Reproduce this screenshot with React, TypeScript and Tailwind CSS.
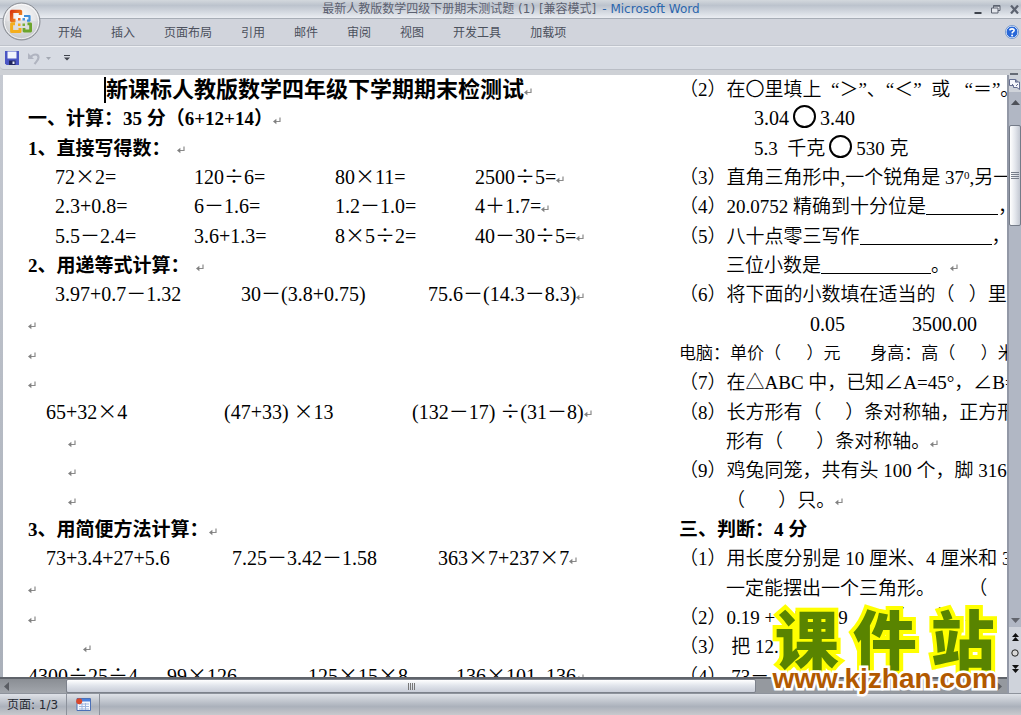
import { Fragment, type ReactNode } from 'react';

const TABS = ['开始', '插入', '页面布局', '引用', '邮件', '审阅', '视图', '开发工具', '加载项'];

function Mark({ className = 'ml-1' }: { className?: string }) {
  return (
    <svg className={`inline-block shrink-0 ${className}`} width="8" height="8" viewBox="0 0 8 8" aria-hidden="true">
      <path d="M7 0.5V4.5H2" fill="none" stroke="#8a8a8a" strokeWidth="1.2" />
      <path d="M0 4.5L3.4 1.8V7.2Z" fill="#808080" />
    </svg>
  );
}

/* Operators take the full-width forms of the Chinese font. */
function T({ children }: { children: string }) {
  return (
    <>
      {children.split(/([×÷]+)/).map((part, i) =>
        i % 2 ? (
          <span key={i} className="leading-none font-['Noto_Sans_CJK_SC',sans-serif]">{part}</span>
        ) : (
          <Fragment key={i}>{part}</Fragment>
        ),
      )}
    </>
  );
}

function Line({ className = '', children }: { className?: string; children?: ReactNode }) {
  return <div className={`flex min-h-0 items-center whitespace-pre ${className}`}>{children}</div>;
}

function Sums({ items, cols, indent }: { items: string[]; cols: string; indent: string }) {
  return (
    <div className={`grid min-h-0 items-center whitespace-pre text-[20px] ${cols} ${indent}`}>
      {items.map((item, i) => (
        <span key={item} className="flex items-center">
          <span><T>{item}</T></span>
          {i === items.length - 1 && <Mark className="mt-1" />}
        </span>
      ))}
    </div>
  );
}

function Blank({ className }: { className: string }) {
  return <span className={`inline-block h-px translate-y-0.5 bg-black ${className}`} />;
}

function Ring() {
  return <span className="mx-1 mb-1 size-[23px] shrink-0 rounded-full border-2 border-black" />;
}

function LeftColumn() {
  const four = 'grid-cols-[139px_141px_140px_auto]';
  return (
    <section className="grid h-[616px] w-[652px] shrink-0 auto-rows-fr pl-[25px]">
      <Line className="pl-[76px] text-[22px] font-bold">
        <span className="h-[26px] w-0.5 shrink-0 bg-black" />
        <h1>新课标人教版数学四年级下学期期末检测试</h1>
        <Mark className="mt-1" />
      </Line>
      <Line className="font-bold">
        <h2>一、计算：35 分（6+12+14）</h2>
        <Mark className="mt-1" />
      </Line>
      <Line className="font-bold">
        <h3>1、直接写得数：</h3>
        <Mark className="mt-1 ml-1.5" />
      </Line>
      <Sums cols={four} indent="pl-[27px]" items={['72×2=', '120÷6=', '80×11=', '2500÷5=']} />
      <Sums cols={four} indent="pl-[27px]" items={['2.3+0.8=', '6－1.6=', '1.2－1.0=', '4＋1.7=']} />
      <Sums cols={four} indent="pl-[27px]" items={['5.5－2.4=', '3.6+1.3=', '8×5÷2=', '40－30÷5=']} />
      <Line className="font-bold">
        <h3>2、用递等式计算：</h3>
        <Mark className="mt-1 ml-1.5" />
      </Line>
      <Sums cols="grid-cols-[186px_187px_auto]" indent="pl-[27px]" items={['3.97+0.7－1.32', '30－(3.8+0.75)', '75.6－(14.3－8.3)']} />
      <Line><Mark className="mt-1" /></Line>
      <Line><Mark className="mt-1" /></Line>
      <Line><Mark className="mt-1" /></Line>
      <Sums cols="grid-cols-[178px_188px_auto]" indent="pl-[18px]" items={['65+32×4', '(47+33) ×13', '(132－17) ÷(31－8)']} />
      <Line className="pl-[40px]"><Mark className="mt-1" /></Line>
      <Line className="pl-[40px]"><Mark className="mt-1" /></Line>
      <Line className="pl-[40px]"><Mark className="mt-1" /></Line>
      <Line className="font-bold">
        <h3>3、用简便方法计算：</h3>
        <Mark className="mt-1" />
      </Line>
      <Sums cols="grid-cols-[186px_206px_auto]" indent="pl-[18px]" items={['73+3.4+27+5.6', '7.25－3.42－1.58', '363×7+237×7']} />
      <Line><Mark className="mt-1" /></Line>
      <Line><Mark className="mt-1" /></Line>
      <Line className="pl-[55px]"><Mark className="mt-1" /></Line>
      <Sums cols="grid-cols-[139px_141px_148px_auto]" indent="pl-0" items={['4300÷25÷4', '99×126', '125×15×8', '136×101–136']} />
    </section>
  );
}

function RightColumn() {
  return (
    <section className="grid h-[616px] min-w-0 flex-1 auto-rows-fr overflow-hidden pl-[24px]">
      <Line>（2）在〇里填上  “＞”、“＜”  或   “＝”。</Line>
      <Line className="pl-[75px] text-[20px]">3.04<Ring />3.40</Line>
      <Line className="pl-[75px]">5.3  千克<Ring />530 克</Line>
      <Line><span>（3）直角三角形中,一个锐角是 37<sup className="text-[11px]">0</sup>,另一</span></Line>
      <Line><span>（4）20.0752 精确到十分位是<Blank className="w-[72px]" />，</span></Line>
      <Line><span>（5）八十点零三写作<Blank className="w-[132px]" />，</span></Line>
      <Line className="pl-[47px]"><span>三位小数是<Blank className="w-[110px]" />。</span><Mark className="mt-1" /></Line>
      <Line>（6）将下面的小数填在适当的（   ）里</Line>
      <Line className="gap-[67px] pl-[131px] text-[20px]"><span>0.05</span><span>3500.00</span></Line>
      <Line className="text-[17px]">电脑：单价（      ）元       身高：高（      ）米</Line>
      <Line>（7）在△ABC 中，已知∠A=45°，∠B=60°</Line>
      <Line>（8）长方形有（     ）条对称轴，正方形</Line>
      <Line className="pl-[47px]">形有（       ）条对称轴。<Mark className="mt-1" /></Line>
      <Line>（9）鸡兔同笼，共有头 100 个，脚 316 只</Line>
      <Line className="pl-[47px]">（       ）只。<Mark className="mt-1" /></Line>
      <Line className="font-bold"><h2>三、判断：4 分</h2></Line>
      <Line>（1）用长度分别是 10 厘米、4 厘米和 3</Line>
      <Line className="pl-[47px]">一定能摆出一个三角形。       （</Line>
      <Line>（2）0.19 + 0.5=0.69        （       ）<Mark className="mt-1 ml-2" /></Line>
      <Line>（3） 把 12.</Line>
      <Line>（4） 73－</Line>
    </section>
  );
}

function OfficeButton() {
  return (
    <button aria-label="Office" className="absolute top-[2px] left-[2px] size-[39px]">
      <svg viewBox="0 0 39 39" className="size-full" aria-hidden="true">
        <defs>
          <radialGradient id="orb" cx="50%" cy="38%" r="62%">
            <stop offset="0" stopColor="#ffffff" />
            <stop offset="0.6" stopColor="#e6e6e8" />
            <stop offset="1" stopColor="#b4b7bc" />
          </radialGradient>
          <linearGradient id="flame" x1="0" y1="0" x2="1" y2="1">
            <stop offset="0" stopColor="#d93a12" />
            <stop offset="1" stopColor="#f59a24" />
          </linearGradient>
        </defs>
        <circle cx="19.5" cy="19.5" r="18.5" fill="url(#orb)" stroke="#8b8f96" />
        <circle cx="19.5" cy="19.5" r="17" fill="none" stroke="#fbfbfc" strokeWidth="1" />
        <path d="M3 20C12 17 27 17 36 20A16.500 16.500 0 0 1 3 20Z" fill="#d2d3d6" opacity="0.55" />
        <g fill="none" strokeLinejoin="round">
          <path d="M13.500 18.500H9.600V9.400H18.500V13" stroke="url(#flame)" strokeWidth="3.400" />
          <path d="M22 14H27.500V18.600H25" stroke="#3f8fdc" strokeWidth="2.200" />
          <path d="M13 21.800H9.600V29.600H18V26" stroke="#f4ae1c" strokeWidth="3" />
          <path d="M25.500 21.800H28.600V29H22V26" stroke="#6da52c" strokeWidth="2.800" />
        </g>
        <path d="M16 16h2.500v2.500H16z" fill="#ee6a1c" />
        <path d="M20.500 16H23v2.500h-2.500z" fill="#4a97e0" />
        <path d="M16 21.500h2.500V24H16z" fill="#f4b11f" />
        <path d="M20.500 21.500H23V24h-2.500z" fill="#7bb03a" />
      </svg>
    </button>
  );
}

function TitleBar() {
  return (
    <header className="flex h-[19px] shrink-0 items-center border-b border-[#a7adb6] bg-linear-to-b from-[#d3d8dd] via-[#bcc3cd] via-30% to-[#eaedf2]">
      <div className="w-[52px]" />
      <p className="min-w-0 flex-1 whitespace-nowrap text-center text-xs leading-[18px] text-[#5c6170] font-['DejaVu_Sans','Noto_Sans_CJK_SC',sans-serif]">
        最新人教版数学四级下册期末测试题 (1) [兼容模式]
        <span className="ml-1.5 text-[#2b66ad]">- Microsoft Word</span>
      </p>
      <div className="flex w-[51px] items-center gap-[9px] pl-1 text-[#5d6370]">
        <button aria-label="最小化">
          <svg width="8" height="10" viewBox="0 0 8 10" aria-hidden="true"><path d="M0.500 9H7.500" stroke="#3e434c" strokeWidth="2" /></svg>
        </button>
        <button aria-label="还原">
          <svg width="10" height="9" viewBox="0 0 10 9" fill="#e3e6ec" stroke="#5d6370" aria-hidden="true">
            <path d="M2.500 0.500h6.500v5h-6.500z" /><path d="M2.500 1h6.500" strokeWidth="1.500" /><path d="M0.500 3h6.500v5H0.500z" />
          </svg>
        </button>
        <button aria-label="关闭">
          <svg width="10" height="9" viewBox="0 0 10 9" aria-hidden="true"><path d="M1 0.500L8 8.500M8 0.500L1 8.500" stroke="#5d6370" strokeWidth="2.200" /></svg>
        </button>
      </div>
    </header>
  );
}

function VerticalBar() {
  return (
    <div className="flex w-[14px] shrink-0 flex-col items-center border-l-2 border-[#9298a6] bg-[#b1b7c4]">
      <div className="h-[17px] w-full bg-[#cfd3da]">
        <svg width="12" height="17" viewBox="0 0 12 17" className="block" aria-hidden="true">
          <path d="M0.500 4.500H6.500V7H10.500V14.500L8 12.500H4.500V10.500H0.500Z" fill="#f5f6fb" stroke="#666f91" />
          <path d="M6.500 4.500L8.500 6L7 7.500M4.500 10.500L3 9M7 11L9 9" fill="none" stroke="#666f91" />
        </svg>
      </div>
      <button aria-label="向上滚动" className="mt-1.5 h-[9px]">
        <svg width="9" height="5" viewBox="0 0 9 5" aria-hidden="true"><path d="M0 5L4.500 0L9 5Z" fill="#4d5058" /></svg>
      </button>
      <div className="mt-[18px] flex h-[101px] w-full flex-col items-center justify-center gap-px rounded-xs border border-[#747b88] bg-linear-to-r from-white via-[#e4e7ed] to-[#c3c8d2]">
        {[0, 1, 2, 3].map((n) => <span key={n} className="h-px w-2 bg-[#777e8b]" />)}
      </div>
      <div className="flex-1" />
      <button aria-label="向下滚动" className="h-[14px]">
        <svg width="9" height="5" viewBox="0 0 9 5" aria-hidden="true"><path d="M0 0L4.500 5L9 0Z" fill="#62656d" /></svg>
      </button>
      <div className="flex h-[66px] w-full flex-col items-center gap-2 bg-[#cfd3db] pt-1.5">
        <button aria-label="前一页">
          <svg className="block" width="7" height="8" viewBox="0 0 7 8" aria-hidden="true"><path d="M0 4L3.500 0L7 4ZM0 8L3.500 4L7 8Z" fill="#111" /></svg>
        </button>
        <button aria-label="选择浏览对象">
          <svg className="block" width="8" height="8" viewBox="0 0 8 8" aria-hidden="true"><circle cx="4" cy="4" r="3.200" fill="#d9d9d9" stroke="#222" /></svg>
        </button>
        <button aria-label="下一页">
          <svg className="block" width="7" height="8" viewBox="0 0 7 8" aria-hidden="true"><path d="M0 0L3.500 4L7 0ZM0 4L3.500 8L7 4Z" fill="#111" /></svg>
        </button>
      </div>
    </div>
  );
}

function HorizontalBar() {
  return (
    <div className="flex h-[16px] shrink-0 items-stretch border-t-2 border-[#5f636a] bg-[#95999f]">
      <button aria-label="向左滚动" className="flex w-[66px] shrink-0 items-center bg-linear-to-b from-[#8a8e94] to-[#a2a6ac] pl-1">
        <svg width="5" height="9" viewBox="0 0 5 9" aria-hidden="true"><path d="M5 0L0 4.500L5 9Z" fill="#5a5d63" /></svg>
      </button>
      <div className="flex w-[690px] items-center justify-center gap-px rounded-xs border border-[#7c818b] bg-linear-to-b from-white via-[#dfe3ea] to-[#c9cdd8]">
        {[0, 1, 2, 3].map((n) => <span key={n} className="h-[7px] w-px bg-[#777]" />)}
      </div>
      <button aria-label="向右滚动" className="flex flex-1 items-center justify-end pr-[5px]">
        <svg width="5" height="9" viewBox="0 0 5 9" aria-hidden="true"><path d="M0 0L5 4.500L0 9Z" fill="#5a5d63" /></svg>
      </button>
    </div>
  );
}

export default function App() {
  return (
    <div lang="zh-CN" className="relative flex h-screen flex-col overflow-hidden bg-[#d1d4dc] font-['Noto_Sans_CJK_SC',sans-serif]">
      <TitleBar />
      <nav className="flex h-[27px] shrink-0 items-center gap-[29px] border-b border-[#bfc3cb] pl-[58px] text-xs text-[#4b505c]">
        {TABS.map((tab) => <button key={tab} className="whitespace-nowrap">{tab}</button>)}
        <button aria-label="帮助" className="ml-auto pr-0.5">
          <svg width="14" height="14" viewBox="0 0 14 14" className="block" aria-hidden="true">
            <circle cx="7" cy="7" r="6" fill="#2867d8" stroke="#e8f0fc" strokeWidth="1" />
            <circle cx="7" cy="7" r="6.600" fill="none" stroke="#5c86c6" strokeWidth="0.700" />
            <path d="M4.800 5.400C5 3.400 9.200 3.300 9.100 5.500C9 6.800 7.200 6.700 7.100 8.400" fill="none" stroke="#fff" strokeWidth="1.600" />
            <circle cx="7.100" cy="10.500" r="1" fill="#fff" />
          </svg>
        </button>
      </nav>
      <div className="flex h-[24px] shrink-0 items-center rounded-bl border-t border-b border-t-[#eef0f4] border-b-[#b9bdc5] bg-[#d7dbe3] pl-[5px]">
        <button aria-label="保存">
          <svg width="14" height="14" viewBox="0 0 14 14" className="block" aria-hidden="true">
            <path d="M0 0H14V14H1.500L0 12.500Z" fill="#4a55c4" />
            <path d="M2.500 0.500h9v7h-9z" fill="#f1f4fd" />
            <path d="M4 9.500h6.500V14H4z" fill="#20265e" />
            <path d="M7.500 10.500h2V13h-2z" fill="#e8ebf8" />
          </svg>
        </button>
        <button aria-label="撤消" className="ml-[9px]">
          <svg width="12" height="13" viewBox="0 0 12 13" className="block" aria-hidden="true">
            <path d="M2.500 5.500C5 1.500 10.500 1.500 10.500 5.500C10.500 8 8.500 9.500 6.500 12" fill="none" stroke="#b0b4c0" strokeWidth="2.200" />
            <path d="M0 1V7H6Z" fill="#b0b4c0" />
          </svg>
        </button>
        <button aria-label="撤消选项" className="ml-[6px]">
          <svg width="5" height="3" viewBox="0 0 5 3" className="block" aria-hidden="true"><path d="M0 0H5L2.500 3Z" fill="#a3a8b2" /></svg>
        </button>
        <button aria-label="自定义快速访问工具栏" className="ml-[13px]">
          <svg width="6" height="6" viewBox="0 0 6 6" className="block" aria-hidden="true"><path d="M0 0H6V1H0ZM0 2.500H6L3 5.500Z" fill="#40444d" /></svg>
        </button>
      </div>
      <div className="flex h-[5px] shrink-0 items-end justify-end bg-[#ced1d6]">
        <span className="mr-[3px] h-0.5 w-[8px] bg-[#666b75]" />
      </div>
      <div className="flex min-h-0 flex-1 bg-linear-to-b from-[#c6cad2] to-[#a9afb9]">
        <div className="flex min-w-0 flex-1 flex-col">
          <main className="ml-[3px] min-h-0 flex-1 overflow-hidden bg-white text-[19px] leading-[29px] text-black font-['Liberation_Serif','Noto_Sans_CJK_SC',serif]">
            <div className="flex font-[350] [&_h1]:font-bold [&_h2]:font-bold [&_h3]:font-bold">
              <LeftColumn />
              <RightColumn />
            </div>
          </main>
          <HorizontalBar />
        </div>
        <VerticalBar />
      </div>
      <footer className="flex h-[22px] shrink-0 items-center border-t border-[#8e939c] bg-linear-to-b from-[#dfe2e8] via-[#abb1bb] via-60% to-[#c8c9cd] text-xs text-[#262a33]">
        <span className="w-[66px] whitespace-nowrap pl-[7px] font-['DejaVu_Sans','Noto_Sans_CJK_SC',sans-serif]">页面: 1/3</span>
        <span className="flex h-full w-[34px] items-center justify-center border-x border-x-[#8c919b]">
          <svg width="15" height="13" viewBox="0 0 15 13" aria-hidden="true">
            <path d="M1 0.500H14.500V12.500H1Z" fill="#f5f8fe" stroke="#4c70b6" />
            <path d="M5 1H14V3.500H5Z" fill="#4a80dc" />
            <path d="M3 6H13M3 8.500H13M3 11H13M6 5V12M9.500 5V12" stroke="#9eb6e0" />
            <circle cx="3.200" cy="3.200" r="3" fill="#d9482c" />
          </svg>
        </span>
      </footer>
      <OfficeButton />
      <div className="pointer-events-none absolute right-[24px] bottom-[22px] flex flex-col items-center whitespace-nowrap">
        <div className="flex gap-[14px] text-[64px] leading-[57px] font-black text-[#598400] [-webkit-text-stroke:8px_#ffff00] [paint-order:stroke_fill]">
          <span>课</span>
          <span>件</span>
          <span>站</span>
        </div>
        <a
          href="http://www.kjzhan.com"
          className="pointer-events-auto text-[28px] leading-[28px] font-bold text-[#b25900] [-webkit-text-stroke:5px_#ffffff] [paint-order:stroke_fill] font-['Liberation_Sans',sans-serif]"
        >
          www.kjzhan.com
        </a>
      </div>
    </div>
  );
}
